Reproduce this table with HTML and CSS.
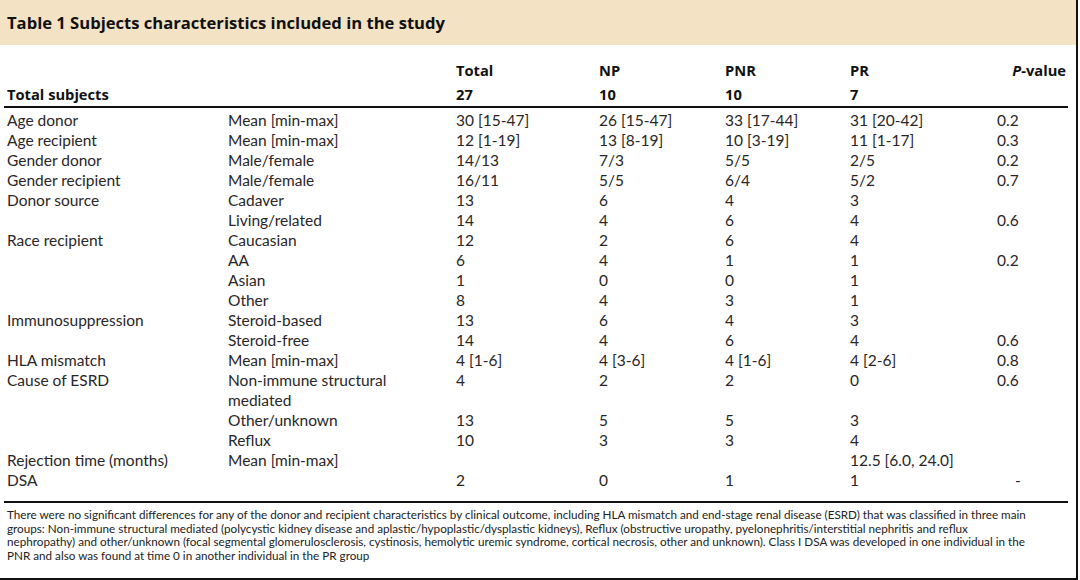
FILE: index.html
```html
<!DOCTYPE html>
<html>
<head>
<meta charset="utf-8">
<link rel="stylesheet" href="styles.css">
</head>
<body>
<div class="page">
  <div class="title-bar"><h1 class="title">Table 1 Subjects characteristics included in the study</h1></div>
  <table class="data">
    <colgroup>
      <col class="c1"><col class="c2"><col class="c3"><col class="c4"><col class="c5"><col class="c6"><col class="c7">
    </colgroup>
    <thead>
      <tr class="h1"><th></th><th></th><th>Total</th><th>NP</th><th>PNR</th><th>PR</th><th class="pv"><i>P</i>-value</th></tr>
      <tr class="h2"><th>Total subjects</th><th></th><th>27</th><th>10</th><th>10</th><th>7</th><th></th></tr>
    </thead>
    <tbody>
      <tr class="first"><td>Age donor</td><td>Mean [min-max]</td><td>30 [15-47]</td><td>26 [15-47]</td><td>33 [17-44]</td><td>31 [20-42]</td><td>0.2</td></tr>
      <tr><td>Age recipient</td><td>Mean [min-max]</td><td>12 [1-19]</td><td>13 [8-19]</td><td>10 [3-19]</td><td>11 [1-17]</td><td>0.3</td></tr>
      <tr><td>Gender donor</td><td>Male/female</td><td>14/13</td><td>7/3</td><td>5/5</td><td>2/5</td><td>0.2</td></tr>
      <tr><td>Gender recipient</td><td>Male/female</td><td>16/11</td><td>5/5</td><td>6/4</td><td>5/2</td><td>0.7</td></tr>
      <tr><td>Donor source</td><td>Cadaver</td><td>13</td><td>6</td><td>4</td><td>3</td><td></td></tr>
      <tr><td></td><td>Living/related</td><td>14</td><td>4</td><td>6</td><td>4</td><td>0.6</td></tr>
      <tr><td>Race recipient</td><td>Caucasian</td><td>12</td><td>2</td><td>6</td><td>4</td><td></td></tr>
      <tr><td></td><td>AA</td><td>6</td><td>4</td><td>1</td><td>1</td><td>0.2</td></tr>
      <tr><td></td><td>Asian</td><td>1</td><td>0</td><td>0</td><td>1</td><td></td></tr>
      <tr><td></td><td>Other</td><td>8</td><td>4</td><td>3</td><td>1</td><td></td></tr>
      <tr><td>Immunosuppression</td><td>Steroid-based</td><td>13</td><td>6</td><td>4</td><td>3</td><td></td></tr>
      <tr><td></td><td>Steroid-free</td><td>14</td><td>4</td><td>6</td><td>4</td><td>0.6</td></tr>
      <tr><td>HLA mismatch</td><td>Mean [min-max]</td><td>4 [1-6]</td><td>4 [3-6]</td><td>4 [1-6]</td><td>4 [2-6]</td><td>0.8</td></tr>
      <tr><td>Cause of ESRD</td><td>Non-immune structural<br>mediated</td><td>4</td><td>2</td><td>2</td><td>0</td><td>0.6</td></tr>
      <tr><td></td><td>Other/unknown</td><td>13</td><td>5</td><td>5</td><td>3</td><td></td></tr>
      <tr><td></td><td>Reflux</td><td>10</td><td>3</td><td>3</td><td>4</td><td></td></tr>
      <tr><td>Rejection time (months)</td><td>Mean [min-max]</td><td></td><td></td><td></td><td>12.5 [6.0, 24.0]</td><td></td></tr>
      <tr class="last"><td>DSA</td><td></td><td>2</td><td>0</td><td>1</td><td>1</td><td class="dash">-</td></tr>
    </tbody>
  </table>
  <p class="note">There were no significant differences for any of the donor and recipient characteristics by clinical outcome, including HLA mismatch and end-stage renal disease (ESRD) that was classified in three main<br>groups: Non-immune structural mediated (polycystic kidney disease and aplastic/hypoplastic/dysplastic kidneys), Reflux (obstructive uropathy, pyelonephritis/interstitial nephritis and reflux<br>nephropathy) and other/unknown (focal segmental glomerulosclerosis, cystinosis, hemolytic uremic syndrome, cortical necrosis, other and unknown). Class I DSA was developed in one individual in the<br>PNR and also was found at time 0 in another individual in the PR group</p>
</div>
</body>
</html>
```

FILE: styles.css
```css
html, body {
  margin: 0;
  padding: 0;
  background: #fff;
}
.page {
  width: 1076px;
  height: 578px;
  border-right: 2px solid #111;
  border-bottom: 2px solid #111;
  font-family: Lato, "Liberation Sans", sans-serif;
  color: #2a2627;
  display: flex;
  flex-direction: column;
}
.title-bar {
  background: #f4e2c5;
  height: 45px;
  display: flex;
  align-items: center;
  padding-left: 7px;
}
.title {
  margin: 0;
  font-family: "Open Sans", Lato, sans-serif;
  font-size: 16.6px;
  font-weight: 700;
  color: #111;
}
.data {
  margin: 13px 0 0 4px;
  width: 1064px;
  border-collapse: collapse;
  table-layout: fixed;
  font-size: 15.5px;
  line-height: 20px;
}
.c1 { width: 221px; }
.c2 { width: 228px; }
.c3 { width: 143px; }
.c4 { width: 126px; }
.c5 { width: 125px; }
.c6 { width: 147px; }
.c7 { width: 74px; }
.data th, .data td {
  padding: 0 0 0 3px;
  text-align: left;
  vertical-align: top;
  white-space: nowrap;
}
.data td.num {
  font-size: 15px;
}
.data th {
  font-family: "Open Sans", Lato, sans-serif;
  font-size: 14.7px;
  font-weight: 700;
  color: #111;
  height: 24px;
  vertical-align: middle;
}
.data th.pv {
  text-align: right;
  padding-right: 2px;
}
.data thead tr.h2 th {
  border-bottom: 2px solid #111;
}
.data tbody tr.first td {
  padding-top: 2px;
}
.data tbody tr.last td {
  padding-bottom: 11px;
  border-bottom: 2px solid #111;
}
.data td.dash {
  padding-left: 21px;
}
.note {
  margin: 5px 0 0 7px;
  width: 1066px;
  font-size: 11.7px;
  line-height: 13.7px;
  color: #222;
  white-space: nowrap;
}
```
